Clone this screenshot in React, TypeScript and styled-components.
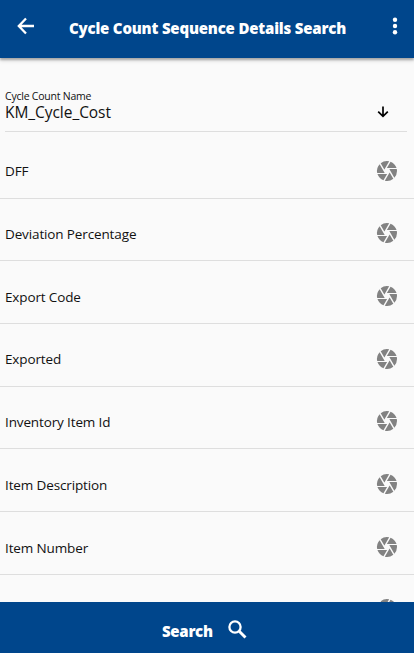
import React from 'react';
import styled, { createGlobalStyle } from 'styled-components';
import { MdCamera } from 'react-icons/md';

const GlobalStyle = createGlobalStyle`
  * { box-sizing: border-box; }
  html, body { margin: 0; overflow: hidden; }
  body { font-family: "Open Sans", "Noto Sans", sans-serif; color: #111; background: #fafafa; }
`;

const Screen = styled.div`
  display: flex;
  flex-direction: column;
  width: 100%;
  height: 653px;
  background: #fafafa;
`;

const Header = styled.header`
  display: flex;
  align-items: center;
  flex: 0 0 58px;
  padding: 0 10px 6px 17px;
  background: #00468c;
  color: #fff;
  z-index: 1;
  box-shadow: 0 2px 2px rgba(0, 0, 0, 0.25), 0 3px 4px rgba(0, 0, 0, 0.12);
`;

const Title = styled.h1`
  flex: 1;
  margin: 3px 0 0 35px;
  font-size: 15px;
  line-height: 20px;
  font-weight: 800;
  letter-spacing: -0.19px;
  white-space: nowrap;
`;

const IconButton = styled.button`
  display: flex;
  padding: 0;
  border: 0;
  background: none;
  color: inherit;
`;

const Content = styled.main`
  flex: 1;
  min-height: 0;
  overflow: hidden;
`;

const SelectField = styled.div`
  display: flex;
  justify-content: space-between;
  height: 74px;
  margin: 0 7px 0 5px;
  padding: 31px 18px 0 0;
  border-bottom: 1px solid #dedede;
`;

const FieldLabel = styled.div`
  font-size: 10.5px;
  line-height: 15px;
  letter-spacing: -0.22px;
`;

const FieldValue = styled.div`
  font-size: 15.5px;
  line-height: 17px;
  letter-spacing: -0.05px;
`;

const DropArrow = styled.svg`
  margin-top: 17px;
`;

const Row = styled.div`
  display: flex;
  align-items: flex-end;
  justify-content: space-between;
  height: 62.7px;
  padding: 0 15px 15px 5px;
  border-bottom: 1px solid #dedede;
  &:first-of-type { height: 66.6px; }
`;

const RowLabel = styled.span`
  font-size: 13.5px;
  line-height: 20px;
  margin-bottom: 1.2px;
  letter-spacing: -0.13px;
  white-space: nowrap;
`;

const Aperture = styled(MdCamera)`
  flex: none;
  width: 24px;
  height: 24px;
  color: #828282;
`;

const List = styled.div``;

const SearchBar = styled.button`
  display: flex;
  align-items: center;
  flex: 0 0 51px;
  padding: 0 0 0 162px;
  gap: 16px;
  border: 0;
  background: #00468c;
  color: #fff;
  font: 800 15px/20px "Open Sans", sans-serif;
  letter-spacing: -0.3px;
`;

const SearchLabel = styled.span`
  width: 50px;
  padding-top: 7px;
  text-align: left;
`;

const SearchIcon = styled.svg`
  margin-top: 4px;
`;

const fields = ['DFF', 'Deviation Percentage', 'Export Code', 'Exported', 'Inventory Item Id', 'Item Description', 'Item Number', ''];

export default function App() {
  return (
    <Screen>
      <GlobalStyle />
      <Header>
        <IconButton aria-label="Back">
          <svg width="17" height="18" viewBox="0 0 17 18" fill="none" stroke="currentColor" strokeWidth="2.3">
            <path d="M9 1.5 1.8 9 9 16.5M2 9h15" />
          </svg>
        </IconButton>
        <Title>Cycle Count Sequence Details Search</Title>
        <IconButton aria-label="More">
          <svg width="18" height="18" viewBox="0 0 18 18" fill="currentColor">
            <circle cx="9" cy="2.8" r="2.2" />
            <circle cx="9" cy="9" r="2.2" />
            <circle cx="9" cy="15.2" r="2.2" />
          </svg>
        </IconButton>
      </Header>
      <Content>
        <SelectField>
          <div>
            <FieldLabel>Cycle Count Name</FieldLabel>
            <FieldValue>KM_Cycle_Cost</FieldValue>
          </div>
          <DropArrow width="12" height="12" viewBox="0 0 12 12" fill="none" stroke="#000" strokeWidth="1.7">
            <path d="M6 .5v9.8M1.2 5.7 6 10.4l4.8-4.7" />
          </DropArrow>
        </SelectField>
        <List>
          {fields.map((name, index) => (
            <Row key={index}>
              <RowLabel>{name}</RowLabel>
              <Aperture />
            </Row>
          ))}
        </List>
      </Content>
      <SearchBar>
        <SearchLabel>Search</SearchLabel>
        <SearchIcon width="19" height="19" viewBox="0 0 19 19" fill="none" stroke="currentColor">
          <circle cx="7" cy="7" r="5.6" strokeWidth="2.3" />
          <path d="m11.2 11.2 6.3 6.3" strokeWidth="2.9" />
        </SearchIcon>
      </SearchBar>
    </Screen>
  );
}
